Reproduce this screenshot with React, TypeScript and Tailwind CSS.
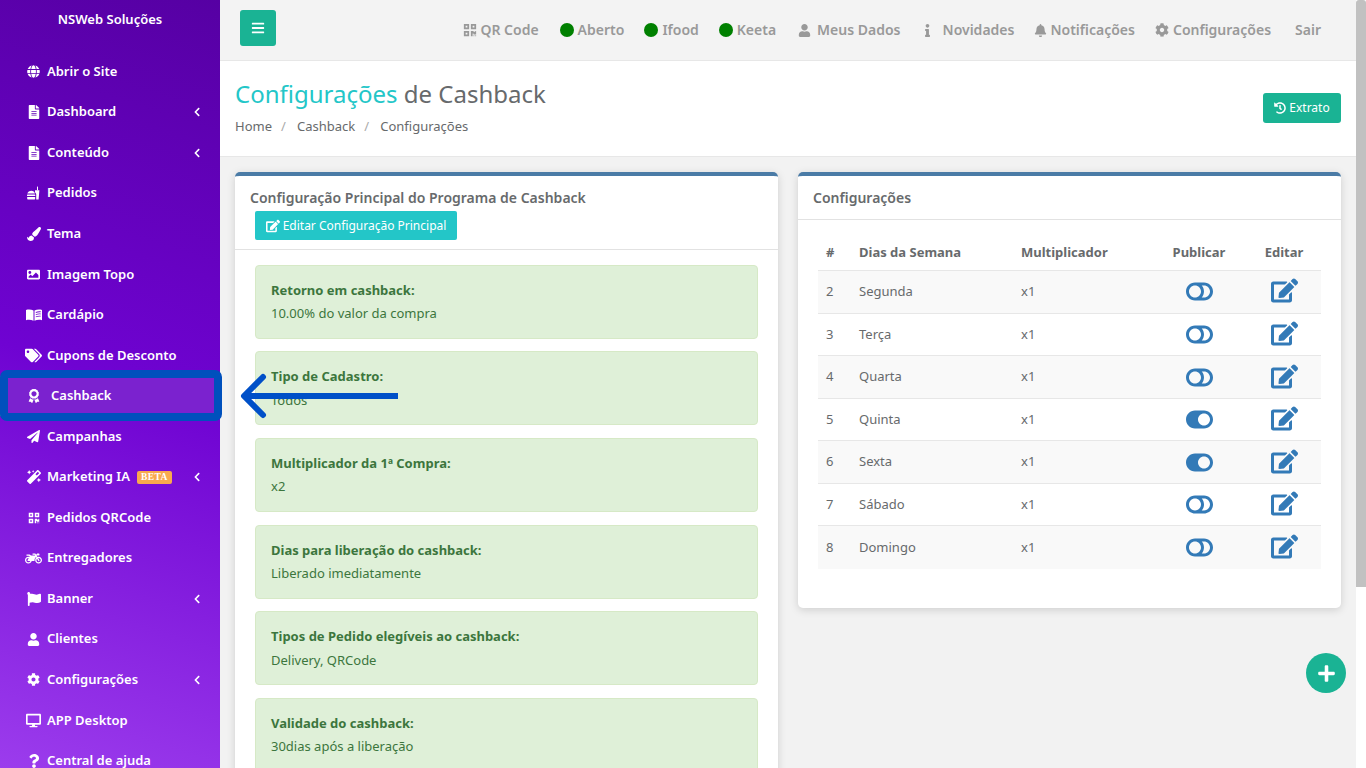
import React from "react";
import {
  FaGlobe, FaFileAlt, FaPaintBrush, FaImage, FaTags, FaAward, FaPaperPlane,
  FaMagic, FaQrcode, FaMotorcycle, FaFlag, FaUser, FaCog, FaDesktop, FaQuestion, FaChevronLeft, FaBars,
  FaInfo, FaBell, FaHistory, FaEdit, FaPlus, FaToggleOn, FaToggleOff,
} from "react-icons/fa";

function BurgerSoda({ className }: { className?: string }) {
  return (
    <svg className={className} width="13" height="14" viewBox="0 0 13 14" fill="currentColor">
      <path d="M0.3 7.6C0.8 5.7 2.4 4.7 4.4 4.7C6.2 4.7 7.5 5.7 8 7.6Z" />
      <rect x="0" y="8.5" width="8.3" height="1.6" rx="0.5" />
      <path d="M0.2 11H8.2V12.6C8.2 13.2 7.8 13.6 7.2 13.6H1.2C0.6 13.6 0.2 13.2 0.2 12.6Z" />
      <path d="M8 4.2H12.4L11.6 13.6H9.2V8L8 6.2Z" />
      <rect x="10" y="0.6" width="1" height="3.6" />
    </svg>
  );
}

function BookLines({ className }: { className?: string }) {
  return (
    <svg className={className} width="16" height="12" viewBox="0 0 16 12" fill="currentColor">
      <path d="M0 1C2.6 0.3 5.4 0.5 7.5 1.6V11.8C5.4 10.8 2.6 10.6 0 11.2Z" />
      <path fillRule="evenodd" d="M8.5 1.6C10.6 0.5 13.4 0.3 16 1V11.2C13.4 10.6 10.6 10.8 8.5 11.8ZM9.8 3V3.9C11.2 3.2 13 3 14.7 3.2V2.3C13 2.1 11.2 2.3 9.8 3ZM9.8 5.2V6.1C11.2 5.4 13 5.2 14.7 5.4V4.5C13 4.3 11.2 4.5 9.8 5.2ZM9.8 7.4V8.3C11.2 7.6 13 7.4 14.7 7.6V6.7C13 6.5 11.2 6.7 9.8 7.4Z" />
    </svg>
  );
}

const menu: { label: string; icon: any; arrow?: boolean; beta?: boolean; active?: boolean; size: string }[] = [
  { label: "Abrir o Site", icon: FaGlobe, size: "text-[13px]" },
  { label: "Dashboard", icon: FaFileAlt, arrow: true, size: "text-[14px]" },
  { label: "Conteúdo", icon: FaFileAlt, arrow: true, size: "text-[14px]" },
  { label: "Pedidos", icon: BurgerSoda, size: "text-[14px]" },
  { label: "Tema", icon: FaPaintBrush, size: "text-[14px]" },
  { label: "Imagem Topo", icon: FaImage, size: "text-[13px]" },
  { label: "Cardápio", icon: BookLines, size: "text-[16px]" },
  { label: "Cupons de Desconto", icon: FaTags, size: "text-[17px]" },
  { label: "Cashback", icon: FaAward, active: true, size: "text-[14px]" },
  { label: "Campanhas", icon: FaPaperPlane, size: "text-[13px]" },
  { label: "Marketing IA", icon: FaMagic, arrow: true, beta: true, size: "text-[14px]" },
  { label: "Pedidos QRCode", icon: FaQrcode, size: "text-[12px]" },
  { label: "Entregadores", icon: FaMotorcycle, size: "text-[17px]" },
  { label: "Banner", icon: FaFlag, arrow: true, size: "text-[14px]" },
  { label: "Clientes", icon: FaUser, size: "text-[13px]" },
  { label: "Configurações", icon: FaCog, arrow: true, size: "text-[13px]" },
  { label: "APP Desktop", icon: FaDesktop, size: "text-[15px]" },
  { label: "Central de ajuda", icon: FaQuestion, size: "text-[14px]" },
];

const alerts = [
  ["Retorno em cashback:", "10.00% do valor da compra"],
  ["Tipo de Cadastro:", "Todos"],
  ["Multiplicador da 1ª Compra:", "x2"],
  ["Dias para liberação do cashback:", "Liberado imediatamente"],
  ["Tipos de Pedido elegíveis ao cashback:", "Delivery, QRCode"],
  ["Validade do cashback:", "30dias após a liberação"],
];

const days: [string, string, boolean][] = [
  ["2", "Segunda", false],
  ["3", "Terça", false],
  ["4", "Quarta", false],
  ["5", "Quinta", true],
  ["6", "Sexta", true],
  ["7", "Sábado", false],
  ["8", "Domingo", false],
];

function Dot({ label }: { label: string }) {
  return (
    <span className="flex items-center gap-[4px]">
      <span className="w-[14px] h-[14px] rounded-full bg-[#008000]" />
      {label}
    </span>
  );
}

export default function App() {
  return (
    <div className="relative flex h-screen w-[1366px] overflow-hidden bg-[#f2f2f2] text-[14px] text-[#676a6c] font-['Noto_Sans','Liberation_Sans',sans-serif]">
      <aside className="w-[220px] shrink-0 h-[790px] bg-[linear-gradient(18deg,#9e3fee_0%,#6f03d2_52%,#5600a3_100%)] text-white">
        <div className="h-[39px] pt-[10px] text-center text-[13px] leading-[19px] font-semibold">NSWeb Soluções</div>
        <nav className="pt-[12.3px]">
          {menu.map((m) => (
            <div key={m.label} className={`relative flex items-center h-[40.55px] font-semibold text-[13px] ${m.active ? "pl-[24px] border-l-[3px] border-[#1ab394] bg-[#7b22cf]" : "pl-[25px]"}`}>
              <span className={`flex justify-center ${m.active ? "w-[14px] mr-[10px]" : "w-[17px] mr-[5px]"}`}>
                <m.icon className={m.size} />
              </span>
              <span>{m.label}</span>
              {m.beta && (
                <span className="ml-[7px] h-[13px] w-[35px] text-center rounded-[2px] bg-[#f9a94e] text-[9.5px] leading-[13px] font-bold tracking-[0.4px] font-['Liberation_Serif',serif]">BETA</span>
              )}
              {m.arrow && <FaChevronLeft className="absolute left-[192px] text-[10px]" />}
            </div>
          ))}
        </nav>
      </aside>

      <main className="flex-1 min-w-0 flex flex-col">
        <header className="h-[61px] shrink-0 flex items-start border-b border-[#e7e7e7] bg-[#f3f3f3] pl-[20px] pr-[35px] pt-[10px] text-[#999] font-semibold">
          <button className="w-[36px] h-[36px] rounded-[3px] bg-[#1ab394] flex items-center justify-center text-white">
            <FaBars className="text-[14px]" />
          </button>
          <div className="ml-auto mt-[10px] h-[20px] leading-[20px] flex items-center text-[14px]">
            <span className="flex items-center gap-[3px]"><FaQrcode className="text-[14px]" />QR Code</span>
            <span className="ml-[21px]"><Dot label="Aberto" /></span>
            <span className="ml-[20px]"><Dot label="Ifood" /></span>
            <span className="ml-[20px]"><Dot label="Keeta" /></span>
            <span className="ml-[22px] flex items-center gap-[6px]"><FaUser className="text-[13px]" />Meus Dados</span>
            <span className="ml-[20px] flex items-center gap-[9px]"><FaInfo className="text-[13px]" />Novidades</span>
            <span className="ml-[20px] flex items-center gap-[3px]"><FaBell className="text-[13px]" />Notificações</span>
            <span className="ml-[20px] flex items-center gap-[4px]"><FaCog className="text-[14px]" />Configurações</span>
            <span className="ml-[24px]">Sair</span>
          </div>
        </header>

        <section className="h-[96px] shrink-0 bg-white border-b border-[#e7e7e7] pl-[15px] pr-[15px] flex items-start justify-between">
          <div>
            <h1 className="mt-[16px] text-[24px] leading-[34px] font-normal">
              <span className="text-[#23c6c8]">Configurações</span> de Cashback
            </h1>
            <div className="mt-[6px] flex text-[13px] leading-[18px]">
              <span>Home</span>
              <span className="mx-[9px] w-[7px] text-[#aaa]">/</span>
              <span>Cashback</span>
              <span className="mx-[9px] w-[7px] text-[#aaa]">/</span>
              <span>Configurações</span>
            </div>
          </div>
          <button className="mt-[32px] h-[30px] w-[78px] rounded-[3px] bg-[#1ab394] text-white text-[12px] flex items-center justify-center gap-[3px]">
            <FaHistory className="text-[12px]" />Extrato
          </button>
        </section>

        <div className="flex items-start gap-[20px] pl-[15px] pr-[15px] pt-[15px]">
          <div className="w-[543px] h-[700px] shrink-0 bg-white rounded-[5px] border-t-[4px] border-[#4a7ba6] shadow-[0_2px_8px_rgba(0,0,0,0.15)]">
            <div className="h-[74px] border-b border-[#e2e2e2] pl-[15px] pt-[12px]">
              <div className="text-[14px] leading-[20px] font-semibold">Configuração Principal do Programa de Cashback</div>
              <button className="mt-[3px] ml-[5px] h-[29px] w-[202px] rounded-[2px] bg-[#23c6c8] text-white text-[12px] flex items-center justify-center gap-[3px]">
                <FaEdit className="text-[14px]" />Editar Configuração Principal
              </button>
            </div>
            <div className="pt-[14.75px] px-[20px] flex flex-col gap-[12.6px]">
              {alerts.map(([a, b]) => (
                <div key={a} className="h-[74px] shrink-0 rounded-[4px] border border-[#d6e9c6] bg-[#dff0d8] text-[#3c763d] pl-[15px] pt-[13px] text-[13px] leading-[23.5px]">
                  <div className="font-bold">{a}</div>
                  <div>{b}</div>
                </div>
              ))}
            </div>
          </div>

          <div className="w-[543px] h-[436px] shrink-0 bg-white rounded-[5px] border-t-[4px] border-[#4a7ba6] shadow-[0_2px_8px_rgba(0,0,0,0.15)]">
            <div className="h-[44px] border-b border-[#e2e2e2] pl-[15px] pt-[12px] text-[14px] leading-[20px] font-semibold">Configurações</div>
            <div className="px-[20px] pt-[13px]">
              <table className="w-[503px] table-fixed border-collapse text-[13px]">
                <colgroup>
                  <col className="w-[33px]" />
                  <col className="w-[162px]" />
                  <col className="w-[138px]" />
                  <col className="w-[96px]" />
                  <col className="w-[74px]" />
                </colgroup>
                <thead>
                  <tr className="h-[37.7px]">
                    <th className="pl-[8px] pt-[2px] text-left font-bold">#</th>
                    <th className="pl-[8px] pt-[2px] text-left font-bold">Dias da Semana</th>
                    <th className="pl-[8px] pt-[2px] text-left font-bold">Multiplicador</th>
                    <th className="pt-[2px] text-center font-bold">Publicar</th>
                    <th className="pt-[2px] text-center font-bold">Editar</th>
                  </tr>
                </thead>
                <tbody>
                  {days.map(([n, d, on], i) => (
                    <tr key={n} className={`h-[42.55px] border-t border-[#e7e7e7] ${i % 2 === 0 ? "bg-[#f9f9f9]" : "bg-white"}`}>
                      <td className="pl-[8px]">{n}</td>
                      <td className="pl-[8px]">{d}</td>
                      <td className="pl-[8px]">x1</td>
                      <td>
                        <div className="flex justify-center text-[#337ab7]">
                          {on ? <FaToggleOn className="text-[27px]" /> : <FaToggleOff className="text-[27px]" />}
                        </div>
                      </td>
                      <td>
                        <div className="flex justify-center -mt-[2px] text-[#337ab7]">
                          <FaEdit className="text-[27px]" />
                        </div>
                      </td>
                    </tr>
                  ))}
                </tbody>
              </table>
            </div>
          </div>
        </div>
      </main>

      <div className="w-[10px] shrink-0 h-full bg-white">
        <div className="h-[587px] rounded-t-[3px] bg-[#c1c1c1]" />
      </div>

      <button className="absolute left-[1306px] top-[653px] w-[40px] h-[40px] rounded-full bg-[#1ab394] text-white flex items-center justify-center">
        <FaPlus className="text-[19px]" />
      </button>

      <div className="absolute left-0 top-[370px] w-[222px] h-[51px] rounded-[7px] border-[8px] border-[#0050bd]" />
      <svg className="absolute left-[238px] top-[370px]" width="165" height="52" viewBox="0 0 165 52" fill="none">
        <path d="M160 26H8" stroke="#0050c8" strokeWidth="6" />
        <path d="M25 7L6 26L25 45" stroke="#0050c8" strokeWidth="6" strokeLinecap="round" strokeLinejoin="round" />
      </svg>
    </div>
  );
}
